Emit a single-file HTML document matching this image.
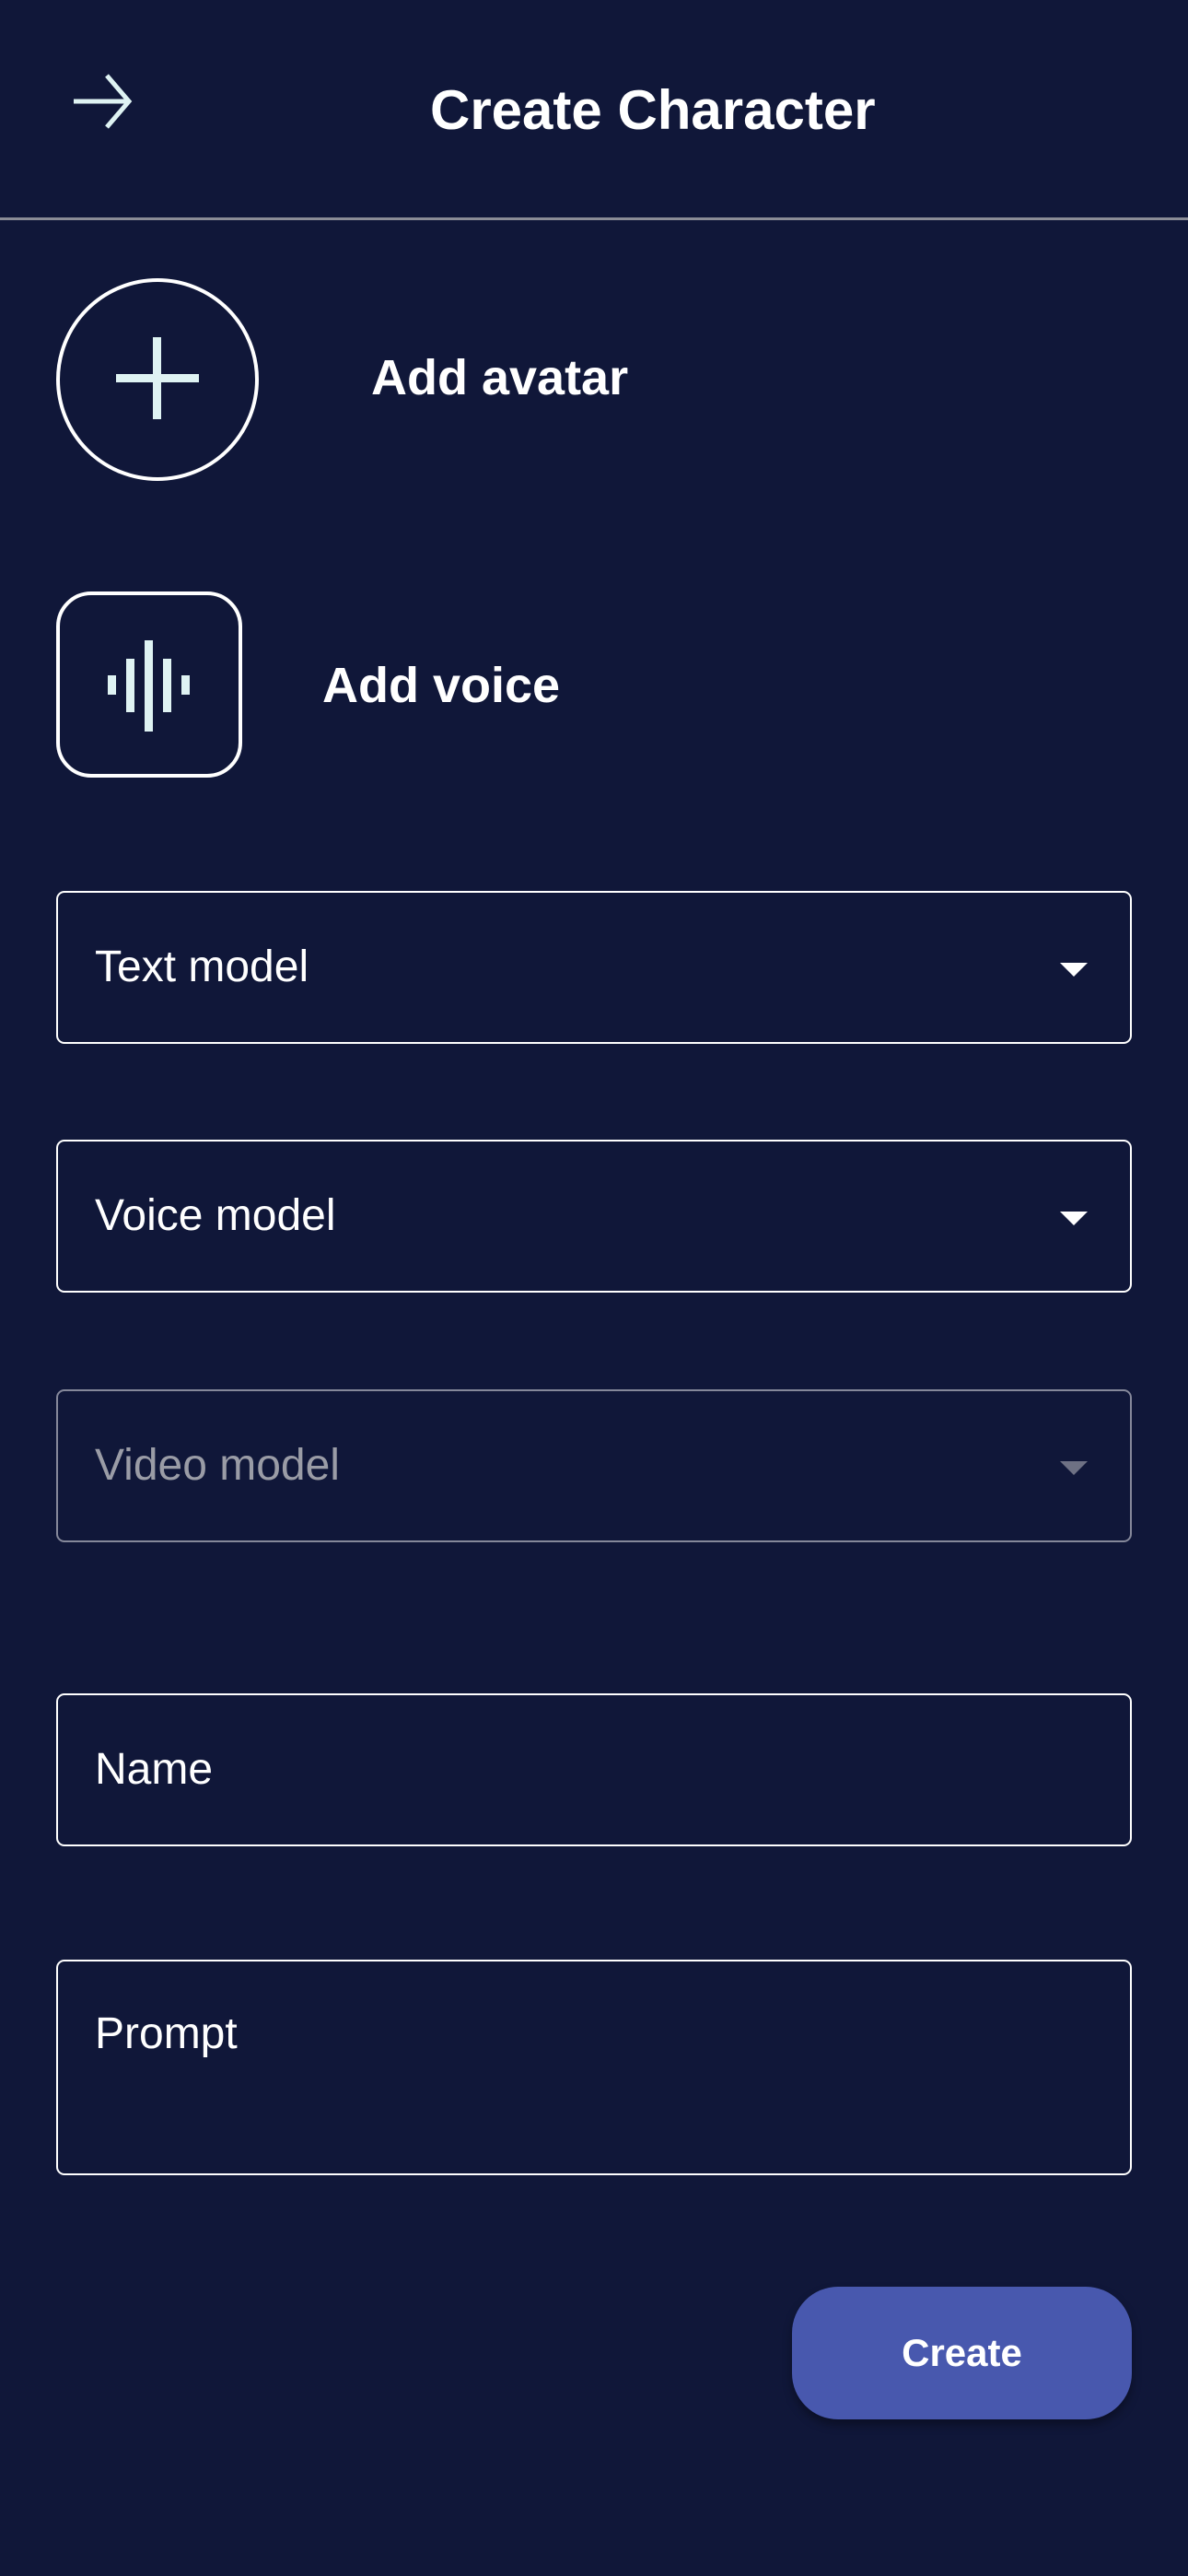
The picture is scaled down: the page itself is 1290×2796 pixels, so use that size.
<!DOCTYPE html>
<html><head><meta charset="utf-8"><style>
*{margin:0;padding:0;box-sizing:border-box}
html,body{width:1290px;height:2796px;background:#101739;font-family:"Liberation Sans",sans-serif;color:#fff;overflow:hidden}
.abs{position:absolute}
.title{left:467px;top:84px;font-size:60px;font-weight:bold;line-height:72px;white-space:nowrap}
.div{left:0;top:236px;width:1290px;height:3px;background:#8a8c96}
.circ{left:61px;top:302px;width:220px;height:220px;border:4px solid #fff;border-radius:50%}
.lbl{font-size:54px;font-weight:bold;line-height:60px;white-space:nowrap}
.sq{left:61px;top:642px;width:202px;height:202px;border:4px solid #fff;border-radius:38px}
.box{left:61px;width:1168px;border:2.5px solid #fff;border-radius:9px}
.box span{position:absolute;left:40px;font-size:48px;line-height:54px}
.tri{position:absolute;right:46px;width:0;height:0;border-left:15px solid transparent;border-right:15px solid transparent;border-top:15px solid #fff}
.btn{left:860px;top:2482px;width:369px;height:144px;background:#4858ae;border-radius:50px;box-shadow:0 6px 10px rgba(0,0,0,.35);text-align:center;line-height:144px;font-size:42px;font-weight:bold}
.bar{position:absolute;width:9px;background:#dff3f3}
</style></head><body>
<svg class="abs" style="left:78px;top:80px" width="66" height="60" viewBox="0 0 66 60"><path d="M2 30H62M38 2L62 30L38 58" stroke="#dff3f3" stroke-width="5" fill="none"/></svg>
<div class="abs title">Create Character</div>
<div class="abs div"></div>
<div class="abs circ"></div>
<div class="abs" style="left:126px;top:406px;width:90px;height:9px;background:#dff3f3"></div>
<div class="abs" style="left:166px;top:366px;width:9px;height:89px;background:#dff3f3"></div>
<div class="abs lbl" style="left:403px;top:380px">Add avatar</div>
<div class="abs sq"></div>
<div class="bar" style="left:117px;top:733px;height:21px"></div>
<div class="bar" style="left:137px;top:715px;height:58px"></div>
<div class="bar" style="left:157px;top:695px;height:99px"></div>
<div class="bar" style="left:177px;top:715px;height:58px"></div>
<div class="bar" style="left:197px;top:733px;height:21px"></div>
<div class="abs lbl" style="left:350px;top:714px">Add voice</div>
<div class="abs box" style="top:967px;height:166px"><span style="top:54px">Text model</span><div class="tri" style="top:76px"></div></div>
<div class="abs box" style="top:1237px;height:166px"><span style="top:54px">Voice model</span><div class="tri" style="top:76px"></div></div>
<div class="abs box" style="top:1508px;height:166px;border-color:#85889a"><span style="top:54px;color:#9a9ca6">Video model</span><div class="tri" style="top:76px;border-top-color:#6e7184"></div></div>
<div class="abs box" style="top:1838px;height:166px"><span style="top:54px">Name</span></div>
<div class="abs box" style="top:2127px;height:234px"><span style="top:52px">Prompt</span></div>
<div class="abs btn">Create</div>
</body></html>
